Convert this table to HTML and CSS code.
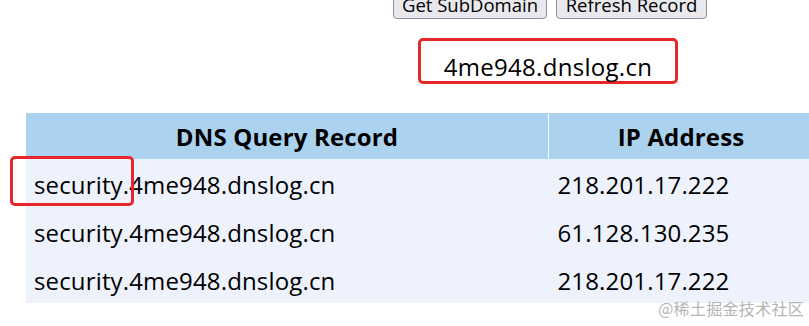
FILE: index.html
```html
<!DOCTYPE html>
<html>
<head>
<meta charset="utf-8">
<link rel="stylesheet" href="styles.css">
</head>
<body>
<div class="page">
  <div class="actions">
    <button class="btn btn-get">Get SubDomain</button>
    <button class="btn btn-refresh">Refresh Record</button>
  </div>
  <div class="domain-row">
    <div class="domain">4me948.dnslog.cn</div>
  </div>
  <table class="records">
    <thead>
      <tr><th class="c-dns">DNS Query Record</th><th class="c-ip">IP Address</th></tr>
    </thead>
    <tbody>
      <tr><td><span class="hl">security.</span>4me948.dnslog.cn</td><td>218.201.17.222</td></tr>
      <tr><td>security.4me948.dnslog.cn</td><td>61.128.130.235</td></tr>
      <tr><td>security.4me948.dnslog.cn</td><td>218.201.17.222</td></tr>
    </tbody>
  </table>
</div>
<div class="watermark">@稀土掘金技术社区</div>
</body>
</html>
```
FILE: styles.css
```css
html, body {
  margin: 0;
  padding: 0;
  background: #fff;
  overflow: hidden;
}
body {
  font-family: "Open Sans", "Noto Sans CJK SC", sans-serif;
  color: #000;
  width: 809px;
  height: 326px;
  position: relative;
}
.page {
  margin-top: -14px;
  display: flex;
  flex-direction: column;
}
.actions {
  display: flex;
  gap: 9px;
  padding-left: 393px;
}
.btn {
  font-family: "Open Sans", sans-serif;
  font-size: 18.5px;
  line-height: 20px;
  height: 33px;
  padding: 4px 4px 0;
  background: #e9e9ed;
  border: 1px solid #8f8f9d;
  border-radius: 4px;
  color: #000;
  white-space: nowrap;
}
.btn-get { width: 154px; }
.btn-refresh { width: 151px; }
.domain-row {
  display: flex;
  padding-left: 418px;
  margin-top: 19px;
}
.domain {
  width: 254px;
  border: 3px solid #e8262a;
  border-radius: 5px;
  font-size: 24px;
  letter-spacing: 0.3px;
  line-height: 40px;
  padding-top: 6px;
  box-sizing: content-box;
  height: 34px;
  text-align: center;
}
.records {
  margin-top: 29px;
  margin-left: 26px;
  border-collapse: collapse;
  width: 787px;
  font-size: 24px;
  letter-spacing: 0.15px;
}
.records th {
  background: #abd3ef;
  height: 46px;
  padding: 0;
  font-weight: 700;
  text-align: center;
}
.records th.c-dns { width: 522px; border-right: 1px solid #fff; }
.records td {
  background: #eef2fd;
  height: 48px;
  padding: 3px 0 0 8px;
  box-sizing: border-box;
  text-align: left;
}
.records td + td { padding-left: 9px; }
.hl {
  position: relative;
}
.hl::after {
  content: "";
  position: absolute;
  left: -24px;
  top: -12px;
  width: 118px;
  height: 44px;
  border: 3px solid #e8262a;
  border-radius: 5px;
}
.watermark {
  position: absolute;
  right: 5px;
  bottom: 6px;
  font-family: "Noto Sans CJK SC", sans-serif;
  font-size: 16px;
  color: #b5b5b5;
  letter-spacing: 0.3px;
}
```
